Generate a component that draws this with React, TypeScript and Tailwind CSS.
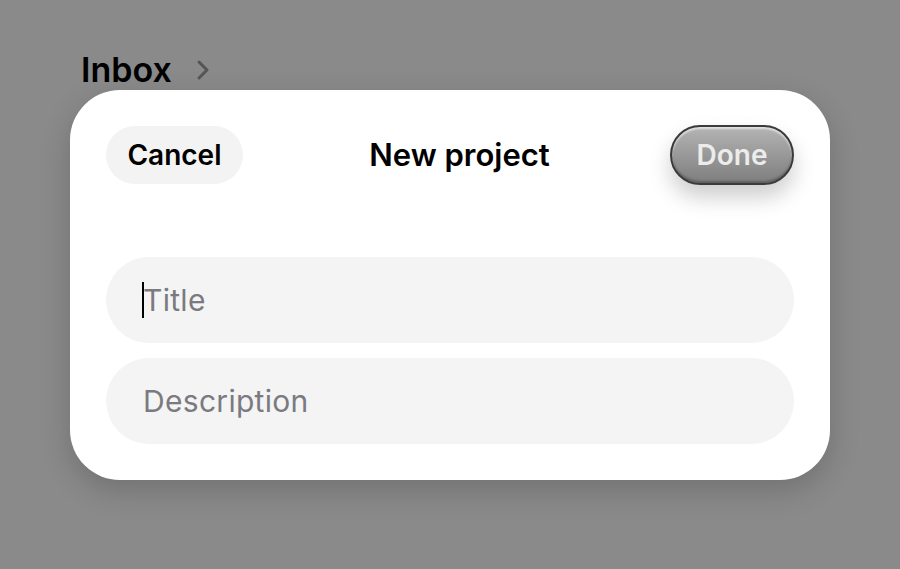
export default function App() {
  return (
    <div
      className="h-[569px] w-[900px] overflow-hidden bg-[#8a8a8a] pt-[50px] pl-[70px]"
      style={{ fontFamily: "Inter, 'Liberation Sans', sans-serif" }}
    >
      {/* Page header behind the sheet */}
      <div className="flex h-[40px] items-center gap-[24px] pl-[11px]">
        <span className="text-[34px] font-semibold leading-none text-black">Inbox</span>
        <svg width="14" height="22" viewBox="0 0 14 22" fill="none" aria-hidden="true">
          <path d="M3 3l8 8-8 8" stroke="#555" strokeWidth="3" strokeLinecap="round" strokeLinejoin="round" />
        </svg>
      </div>

      {/* Sheet */}
      <div className="w-[760px] h-[390px] rounded-[50px] bg-white px-[36px] pt-[36px] shadow-[0_10px_30px_rgba(0,0,0,0.18)]">
        <div className="flex h-[58px] items-center justify-between">
          <button className="h-[58px] w-[137px] rounded-full bg-[#f3f3f3] text-[28px] font-semibold text-black">
            Cancel
          </button>
          <h1 className="pl-[6px] text-[31px] font-semibold text-black">New project</h1>
          <button className="h-[60px] w-[124px] rounded-full border-2 border-[#3a3a3a] bg-gradient-to-b from-[#b4b4b4] to-[#7e7e7e] text-[28px] font-semibold text-[#ececec] shadow-[inset_0_2px_2px_rgba(255,255,255,0.6),inset_0_-2px_2px_rgba(0,0,0,0.25),0_12px_22px_rgba(0,0,0,0.2)]">
            Done
          </button>
        </div>

        <div className="mt-[73px] flex flex-col gap-[15px]">
          <div className="flex h-[86px] items-center rounded-full bg-[#f4f4f4] px-[36px]">
            <span className="mr-[-1px] h-[36px] w-[2px] bg-black" />
            <span className="text-[30px] tracking-[0.01em] text-[#7a7a80]">Title</span>
          </div>
          <div className="flex h-[86px] items-center rounded-full bg-[#f4f4f4] px-[37px]">
            <span className="text-[30px] tracking-[0.01em] text-[#7a7a80]">Description</span>
          </div>
        </div>
      </div>
    </div>
  );
}
